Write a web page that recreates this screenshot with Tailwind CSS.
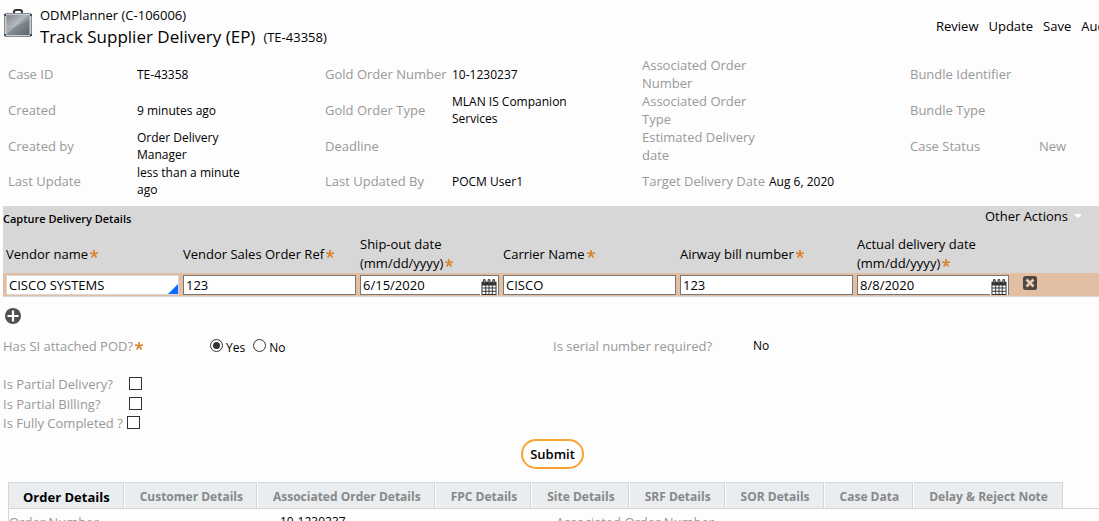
<!DOCTYPE html>
<html lang="en">
<head>
<meta charset="utf-8">
<meta name="viewport" content="width=device-width, initial-scale=1">
<title>Track Supplier Delivery (EP)</title>
<script src="https://cdn.jsdelivr.net/npm/@tailwindcss/browser@4"></script>
</head>
<body class="h-screen overflow-hidden bg-[#fdfdfd] font-['Open_Sans',sans-serif] text-[13px] leading-[18px] text-black">
<svg class="hidden" aria-hidden="true">
  <symbol id="calendar" viewBox="0 0 16 17">
    <path fill="#333" d="M0 3h1.500V1.500Q1.500 0 3 0t1.500 1.500V3h2V1.500Q6.500 0 8 0t1.500 1.500V3h2V1.500Q11.500 0 13 0t1.500 1.500V3H16v14H0z"/>
    <path fill="#fff" d="M1 7h3v2H1zM5 7h2.500v2H5zM8.500 7H11v2H8.500zM12 7h3v2h-3zM1 10h3v2.500H1zM5 10h2.500v2.500H5zM8.500 10H11v2.500H8.500zM12 10h3v2.500h-3zM1 13.500h3V16H1zM5 13.500h2.500V16H5zM8.500 13.500H11V16H8.500zM12 13.500h3V16h-3z"/>
    <path stroke="#bbb" stroke-width=".8" d="M3 1v3M8 1v3M13 1v3"/>
  </symbol>
  <symbol id="star" viewBox="0 0 8 8">
    <path fill="none" stroke="#d9822b" stroke-width="1.700" d="M4 0v4M.2 2.900 4 4l3.800-1.100M1.600 7.500 4 4l2.400 3.500"/>
  </symbol>
</svg>

<header class="flex h-14 items-start pt-[6px]">
  <svg class="ml-1 mt-[3px] h-[29px] w-7 shrink-0" viewBox="0 1 28 29" aria-hidden="true">
    <defs>
      <linearGradient id="case" x1="0" y1="0" x2="1" y2="1"><stop offset="0" stop-color="#687078"/><stop offset=".45" stop-color="#a9afb5"/><stop offset=".5" stop-color="#858c93"/><stop offset="1" stop-color="#5d666f"/></linearGradient>
    </defs>
    <path d="M10 6V4q0-2 2-2h4q2 0 2 2v2" fill="none" stroke="#333" stroke-width="2"/>
    <rect x=".5" y="5.500" width="27" height="23" rx="1.500" fill="#c9cdd2" stroke="#858b93"/>
    <rect x="2.500" y="7" width="23" height="20" fill="url(#case)"/>
    <path d="M2.500 21Q14 19 25.500 11V7h-23z" fill="#fff" opacity=".15"/>
    <path d="M0 7h2M26 7h2M0 27h2M26 27h2" stroke="#444b58" stroke-width="2"/>
  </svg>
  <div class="ml-2">
    <p>ODMPlanner (C-106006)</p>
    <h1 class="flex items-center gap-2 text-[17px] leading-[26px]">Track Supplier Delivery (EP) <span class="text-[13px]">(TE-43358)</span></h1>
  </div>
  <nav class="ml-auto mt-[11px] flex w-[163px] gap-[10px] overflow-hidden whitespace-nowrap">
    <a href="#">Review</a><a href="#">Update</a><a href="#">Save</a><a href="#">Audit</a>
  </nav>
</header>

<dl class="grid grid-cols-[129fr_188fr_127fr_190fr_127fr_141fr_129fr_60fr] grid-rows-[36px_36px_36px_34px] items-center pl-2 text-[#999]">
  <dt>Case ID</dt><dd class="max-w-[110px] text-xs leading-[17px] text-black">TE-43358</dd>
  <dt class="whitespace-nowrap">Gold Order Number</dt><dd class="max-w-[130px] text-xs leading-[17px] text-black">10-1230237</dd>
  <dt>Associated Order Number</dt><dd></dd>
  <dt>Bundle Identifier</dt><dd></dd>
  <dt>Created</dt><dd class="max-w-[110px] text-xs leading-[17px] text-black">9 minutes ago</dd>
  <dt>Gold Order Type</dt><dd class="max-w-[130px] text-xs leading-[17px] text-black">MLAN IS Companion Services</dd>
  <dt>Associated Order Type</dt><dd></dd>
  <dt>Bundle Type</dt><dd></dd>
  <dt>Created by</dt><dd class="max-w-[110px] text-xs leading-[17px] text-black">Order Delivery Manager</dd>
  <dt>Deadline</dt><dd></dd>
  <dt>Estimated Delivery date</dt><dd></dd>
  <dt>Case Status</dt><dd>New</dd>
  <dt>Last Update</dt><dd class="max-w-[110px] text-xs leading-[17px] text-black">less than a minute ago</dd>
  <dt>Last Updated By</dt><dd class="max-w-[130px] text-xs leading-[17px] text-black">POCM User1</dd>
  <dt class="whitespace-nowrap">Target Delivery Date</dt><dd class="text-xs leading-[17px] text-black">Aug 6, 2020</dd>
  <dt></dt><dd></dd>
</dl>

<section class="ml-[3px] mt-2">
  <div class="flex h-[29px] items-start justify-between bg-[#d7d7d7]">
    <h2 class="pt-1 text-[11px] font-semibold">Capture Delivery Details</h2>
    <button class="mr-[17px] flex items-center gap-[6px] pt-[1px]">Other Actions
      <svg class="h-1 w-2" viewBox="0 0 8 4" aria-hidden="true"><path fill="#fff" d="M0 0h8L4 4z"/></svg>
    </button>
  </div>
  <table class="w-full table-fixed border-b border-[#d7d7d7]">
    <colgroup><col class="w-[177px]"><col class="w-[177px]"><col class="w-[143px]"><col class="w-[177px]"><col class="w-[177px]"><col class="w-[156px]"><col></colgroup>
    <thead class="bg-[#d7d7d7] text-left leading-[19px]">
      <tr class="h-[38px]">
        <th class="pl-[3px] font-normal"><label for="vendor">Vendor name</label><svg class="ml-[2px] inline size-2 align-[1px]" role="img" aria-label="required"><use href="#star"/></svg></th>
        <th class="pl-[3px] font-normal"><label for="ref">Vendor Sales Order Ref</label><svg class="ml-[2px] inline size-2 align-[1px]" role="img" aria-label="required"><use href="#star"/></svg></th>
        <th class="pl-[3px] font-normal"><label for="ship">Ship-out date (mm/dd/yyyy)</label><svg class="ml-[2px] inline size-2 align-[1px]" role="img" aria-label="required"><use href="#star"/></svg></th>
        <th class="pl-[3px] font-normal"><label for="carrier">Carrier Name</label><svg class="ml-[2px] inline size-2 align-[1px]" role="img" aria-label="required"><use href="#star"/></svg></th>
        <th class="pl-[3px] font-normal"><label for="airway">Airway bill number</label><svg class="ml-[2px] inline size-2 align-[1px]" role="img" aria-label="required"><use href="#star"/></svg></th>
        <th class="pl-[3px] font-normal"><label for="actual">Actual delivery date<br>(mm/dd/yyyy)</label><svg class="ml-[2px] inline size-2 align-[1px]" role="img" aria-label="required"><use href="#star"/></svg></th>
        <td></td>
      </tr>
    </thead>
    <tbody class="bg-[#e2bfa3]">
      <tr class="h-[23px] align-top">
        <td class="pl-[3px] pr-px pt-[2px]"><div class="relative"><input id="vendor" value="CISCO SYSTEMS" class="block h-5 w-full border border-[#d7d7d7] bg-white px-[2px]"><svg class="absolute bottom-px right-px size-[10px]" viewBox="0 0 10 10" aria-hidden="true"><path fill="#0a6cff" d="M10 0v10H0z"/></svg></div></td>
        <td class="pl-[3px] pr-px pt-[2px]"><input id="ref" value="123" class="block h-5 w-full border border-[#777] bg-white px-[2px]"></td>
        <td class="pl-[3px] pr-px pt-[2px]"><div class="relative"><input id="ship" value="6/15/2020" class="block h-5 w-full border border-[#777] bg-white px-[2px]"><button aria-label="Pick ship-out date" class="absolute bottom-0 right-px bg-white px-px"><svg class="block h-4 w-4"><use href="#calendar"/></svg></button></div></td>
        <td class="pl-[3px] pr-px pt-[2px]"><input id="carrier" value="CISCO" class="block h-5 w-full border border-[#777] bg-white px-[2px]"></td>
        <td class="pl-[3px] pr-px pt-[2px]"><input id="airway" value="123" class="block h-5 w-full border border-[#777] bg-white px-[2px]"></td>
        <td class="pl-[3px] pr-px pt-[2px]"><div class="relative"><input id="actual" value="8/8/2020" class="block h-5 w-full border border-[#777] bg-white px-[2px]"><button aria-label="Pick actual delivery date" class="absolute bottom-0 right-px bg-white px-px"><svg class="block h-4 w-4"><use href="#calendar"/></svg></button></div></td>
        <td class="pl-[13px]"><button aria-label="Delete row" class="mt-[3px] block"><svg class="block size-[14px]" viewBox="0 0 14 14"><rect width="14" height="14" rx="2.500" fill="#50463f"/><path d="m3.500 3.500 7 7m0-7-7 7" stroke="#e8cdb6" stroke-width="2.600"/></svg></button></td>
      </tr>
    </tbody>
  </table>
  <button aria-label="Add row" class="ml-[2px] mt-[11px] block"><svg class="block size-4" viewBox="0 0 16 16"><circle cx="8" cy="8" r="8" fill="#505050"/><path d="M8 2.500v11M2.500 8h11" stroke="#fff" stroke-width="2.200"/></svg></button>
</section>

<section class="pl-[3px] text-[#999]">
  <div class="mt-3 grid h-[18px] grid-cols-[207fr_343fr_200fr_346fr] items-center">
    <span id="pod">Has SI attached POD?<svg class="ml-[2px] inline size-2 align-[1px]" role="img" aria-label="required"><use href="#star"/></svg></span>
    <div role="radiogroup" aria-labelledby="pod" class="flex items-center gap-2 text-xs text-black">
      <label class="flex items-center gap-[3px]"><input type="radio" name="pod" checked class="size-[13px] appearance-none rounded-full border border-[#333] bg-white bg-clip-content p-[2px] checked:bg-[#333]"><span class="pt-1">Yes</span></label>
      <label class="flex items-center gap-[3px]"><input type="radio" name="pod" class="size-[13px] appearance-none rounded-full border border-[#333] bg-white bg-clip-content p-[2px] checked:bg-[#333]"><span class="pt-1">No</span></label>
    </div>
    <span>Is serial number required?</span>
    <span class="text-xs leading-[18px] text-black">No</span>
  </div>
  <div class="mt-5 flex flex-col items-start leading-5">
    <div class="flex items-center"><label for="delivery" class="w-[126px]">Is Partial Delivery?</label><input id="delivery" type="checkbox" class="size-[13px] appearance-none border border-[#333] bg-white checked:bg-[#333]"></div>
    <div class="flex items-center"><label for="billing" class="w-[126px]">Is Partial Billing?</label><input id="billing" type="checkbox" class="size-[13px] appearance-none border border-[#333] bg-white checked:bg-[#333]"></div>
    <div class="flex items-center gap-1 leading-[18px]"><label for="completed">Is Fully Completed ?</label><input id="completed" type="checkbox" class="size-[13px] appearance-none border border-[#333] bg-white checked:bg-[#333]"></div>
  </div>
</section>

<div class="mt-[7px] flex justify-center pl-[6px]">
  <button class="h-[30px] rounded-full border-2 border-[#fba330] bg-white px-[7px] font-semibold">Submit</button>
</div>

<section class="ml-2 mt-[13px]">
  <div role="tablist" class="flex gap-px whitespace-nowrap border-b border-[#d5d5d5] text-xs font-bold text-[#888]">
    <button role="tab" aria-selected="true" class="h-[26px] border-l border-r border-t border-[#d5d5d5] bg-[#e9edf0] pl-[14px] pr-[13px] pt-[5px] text-[13px] text-black">Order Details</button>
    <button role="tab" class="border-r border-t border-[#d5d5d5] bg-[#e9edf0] pl-[15px] pr-[13px] pt-1">Customer Details</button>
    <button role="tab" class="border-r border-t border-[#d5d5d5] bg-[#e9edf0] pl-[15px] pr-[13px] pt-1">Associated Order Details</button>
    <button role="tab" class="border-r border-t border-[#d5d5d5] bg-[#e9edf0] pl-[15px] pr-[13px] pt-1">FPC Details</button>
    <button role="tab" class="border-r border-t border-[#d5d5d5] bg-[#e9edf0] pl-[15px] pr-[13px] pt-1">Site Details</button>
    <button role="tab" class="border-r border-t border-[#d5d5d5] bg-[#e9edf0] pl-[15px] pr-[13px] pt-1">SRF Details</button>
    <button role="tab" class="border-r border-t border-[#d5d5d5] bg-[#e9edf0] pl-[15px] pr-[13px] pt-1">SOR Details</button>
    <button role="tab" class="border-r border-t border-[#d5d5d5] bg-[#e9edf0] pl-[15px] pr-[13px] pt-1">Case Data</button>
    <button role="tab" class="border-r border-t border-[#d5d5d5] bg-[#e9edf0] pl-[15px] pr-[14px] pt-1">Delay &amp; Reject Note</button>
  </div>
  <dl role="tabpanel" class="grid grid-cols-[271fr_276fr_543fr] border-l border-[#d5d5d5] pb-4 pt-1 text-[#999]">
    <dt>Order Number</dt><dd class="text-xs leading-[18px] text-black">10-1230237</dd><dt>Associated Order Number</dt>
  </dl>
</section>
</body>
</html>
